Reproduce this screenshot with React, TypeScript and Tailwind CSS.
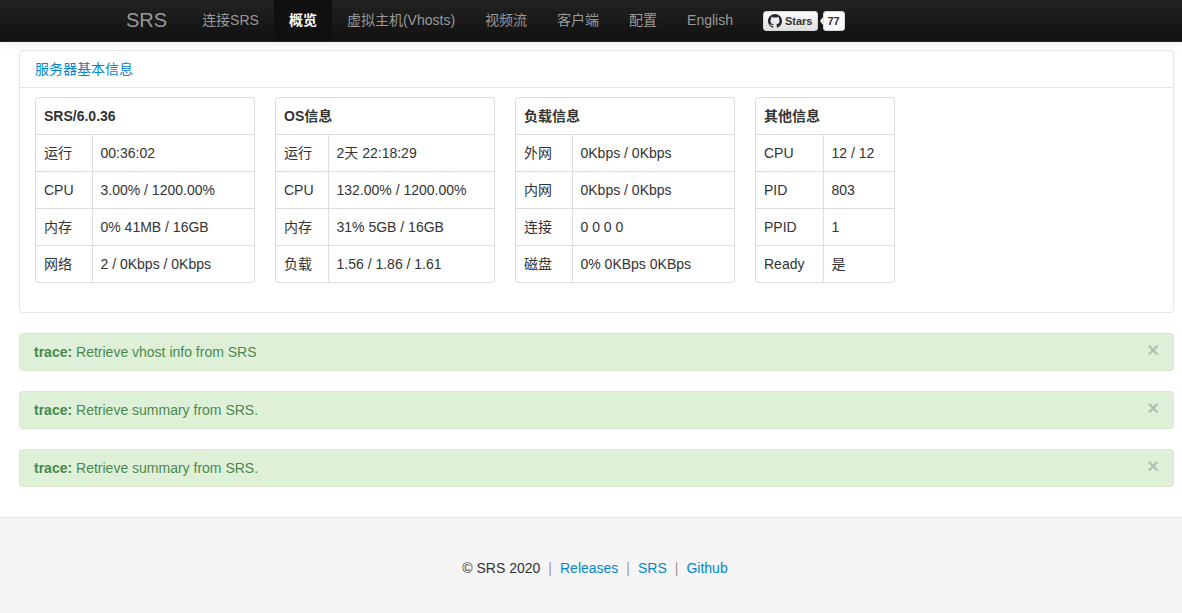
import React from "react";

type Row = [string, string];

interface InfoTable {
  title: string;
  width: string;
  labelWidth: string;
  rows: Row[];
}

const navItems = ["连接SRS", "概览", "虚拟主机(Vhosts)", "视频流", "客户端", "配置", "English"];
const activeItem = "概览";

const tables: InfoTable[] = [
  {
    title: "SRS/6.0.36",
    width: "w-[220px]",
    labelWidth: "w-[56px]",
    rows: [
      ["运行", "00:36:02"],
      ["CPU", "3.00% / 1200.00%"],
      ["内存", "0% 41MB / 16GB"],
      ["网络", "2 / 0Kbps / 0Kbps"],
    ],
  },
  {
    title: "OS信息",
    width: "w-[220px]",
    labelWidth: "w-[52px]",
    rows: [
      ["运行", "2天 22:18:29"],
      ["CPU", "132.00% / 1200.00%"],
      ["内存", "31% 5GB / 16GB"],
      ["负载", "1.56 / 1.86 / 1.61"],
    ],
  },
  {
    title: "负载信息",
    width: "w-[220px]",
    labelWidth: "w-[56px]",
    rows: [
      ["外网", "0Kbps / 0Kbps"],
      ["内网", "0Kbps / 0Kbps"],
      ["连接", "0 0 0 0"],
      ["磁盘", "0% 0KBps 0KBps"],
    ],
  },
  {
    title: "其他信息",
    width: "w-[140px]",
    labelWidth: "w-[67px]",
    rows: [
      ["CPU", "12 / 12"],
      ["PID", "803"],
      ["PPID", "1"],
      ["Ready", "是"],
    ],
  },
];

const traces = [
  "Retrieve vhost info from SRS",
  "Retrieve summary from SRS.",
  "Retrieve summary from SRS.",
];

const footerLinks = ["Releases", "SRS", "Github"];

function GithubMark() {
  return (
    <svg viewBox="0 0 16 16" className="h-3.5 w-3.5 shrink-0" fill="#24292f" aria-hidden="true">
      <path d="M8 0C3.58 0 0 3.58 0 8c0 3.54 2.29 6.53 5.47 7.59.4.07.55-.17.55-.38 0-.19-.01-.82-.01-1.49-2.01.37-2.53-.49-2.69-.94-.09-.23-.48-.94-.82-1.13-.28-.15-.68-.52-.01-.53.63-.01 1.08.58 1.23.82.72 1.21 1.87.87 2.33.66.07-.52.28-.87.51-1.07-1.78-.2-3.64-.89-3.64-3.95 0-.87.31-1.59.82-2.15-.08-.2-.36-1.02.08-2.12 0 0 .67-.21 2.2.82.64-.18 1.32-.27 2-.27s1.36.09 2 .27c1.53-1.04 2.2-.82 2.2-.82.44 1.1.16 1.92.08 2.12.51.56.82 1.27.82 2.15 0 3.07-1.87 3.75-3.65 3.95.29.25.54.73.54 1.48 0 1.07-.01 1.93-.01 2.2 0 .21.15.46.55.38A8.01 8.01 0 0 0 16 8c0-4.42-3.58-8-8-8z" />
    </svg>
  );
}

function StarsButton() {
  return (
    <div className="ml-[15px] flex items-center text-[11px] leading-[14px] font-bold text-[#333]">
      <a
        href="#stars"
        className="flex h-5 items-center gap-[3px] rounded-[3px] border border-[#d4d4d4] bg-linear-to-b from-[#fcfcfc] to-[#dfdfdf] px-1"
      >
        <GithubMark />
        <span>Stars</span>
      </a>
      <svg viewBox="0 0 3 8" className="ml-0.5 h-2 w-[3px]" aria-hidden="true">
        <path d="M3 0 0 4l3 4z" fill="#fafafa" />
      </svg>
      <a href="#stargazers" className="flex h-5 items-center rounded-[3px] border border-[#d4d4d4] bg-[#fafafa] px-1">
        77
      </a>
    </div>
  );
}

function Navbar() {
  return (
    <header className="border-b border-[#252525] bg-linear-to-b from-[#222] to-[#111] shadow-[0_1px_10px_rgba(0,0,0,0.1)]">
      <div className="mx-auto flex h-[41px] max-w-[930px] items-stretch text-[#999]">
        <a href="#home" className="pr-5 pt-[10px] text-[20px] leading-5">
          SRS
        </a>
        <nav className="flex">
          {navItems.map((item) => (
            <a
              key={item}
              href={"#" + item}
              className={
                item === activeItem
                  ? "whitespace-nowrap bg-[#111] px-[15px] py-[10px] font-bold text-white shadow-[inset_0_3px_8px_rgba(0,0,0,0.125)]"
                  : "whitespace-nowrap px-[15px] py-[10px]"
              }
            >
              {item}
            </a>
          ))}
        </nav>
        <StarsButton />
      </div>
    </header>
  );
}

function SummaryTable({ title, width, labelWidth, rows }: InfoTable) {
  return (
    <div className={width + " overflow-hidden rounded border border-[#ddd]"}>
      <table className="w-full table-fixed border-collapse text-left">
        <colgroup>
          <col className={labelWidth} />
          <col />
        </colgroup>
        <thead>
          <tr>
            <th colSpan={2} className="px-2 py-2 font-bold">
              {title}
            </th>
          </tr>
        </thead>
        <tbody>
          {rows.map(([label, value]) => (
            <tr key={label} className="border-t border-[#ddd]">
              <td className="border-r border-[#ddd] px-2 py-2">{label}</td>
              <td className="px-2 py-2 whitespace-nowrap">{value}</td>
            </tr>
          ))}
        </tbody>
      </table>
    </div>
  );
}

export default function App() {
  return (
    <div className="flex min-h-screen flex-col bg-white font-['Liberation_Sans','Noto_Sans_CJK_SC',sans-serif] text-[14px] leading-5 text-[#333]">
      <Navbar />

      <main className="flex flex-col gap-5 pt-2 pr-2 pb-[30px] pl-[19px]">
        <section className="rounded border border-[#e5e5e5]">
          <div className="px-[15px] py-2">
            <a href="#summary" className="text-[#08c]">
              服务器基本信息
            </a>
          </div>
          <div className="flex flex-wrap gap-x-5 border-t border-[#e5e5e5] px-[15px] pt-[9px] pb-[29px]">
            {tables.map((table) => (
              <SummaryTable key={table.title} {...table} />
            ))}
          </div>
        </section>

        {traces.map((message, index) => (
          <div
            key={index}
            role="status"
            className="flex items-start justify-between rounded border border-[#d6e9c6] bg-[#dff0d8] px-[14px] py-2 text-[#468847] [text-shadow:0_1px_0_rgba(255,255,255,0.5)]"
          >
            <p>
              <strong>trace:</strong> {message}
            </p>
            <button
              type="button"
              aria-label="Close"
              className="h-4 text-[20px] leading-4 font-bold text-black opacity-20 [text-shadow:0_1px_0_#fff]"
            >
              ×
            </button>
          </div>
        ))}
      </main>

      <footer className="flex-1 border-t border-[#e5e5e5] bg-[#f5f5f5] pt-10 pb-[30px] pl-2">
        <p className="flex justify-center gap-2">
          <span>© SRS 2020</span>
          {footerLinks.map((link) => (
            <React.Fragment key={link}>
              <span className="text-[#999]">|</span>
              <a href={"#" + link} className="text-[#08c]">
                {link}
              </a>
            </React.Fragment>
          ))}
        </p>
      </footer>
    </div>
  );
}
